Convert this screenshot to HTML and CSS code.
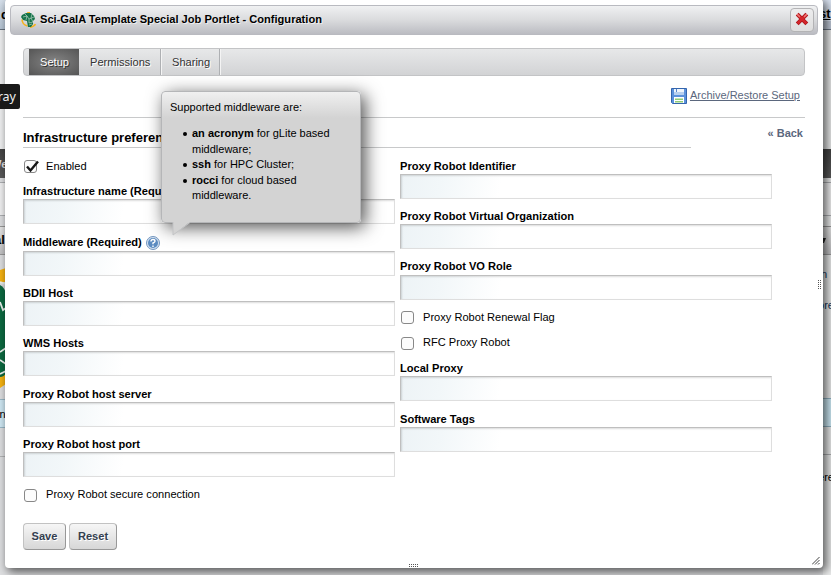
FILE: index.html
```html
<!DOCTYPE html>
<html lang="en">
<head>
<meta charset="utf-8">
<title>Configuration</title>
<link rel="stylesheet" href="styles.css">
</head>
<body>
<div class="page">
  <div class="edge edge-left">
    <div class="l-top"><span>d</span></div>
    <div class="l-blank"></div>
    <div class="l-nav"><span>We</span></div>
    <div class="l-bread"></div>
    <div class="l-gap"></div>
    <div class="l-head"><span>al</span></div>
    <div class="l-gap2"></div>
    <svg class="l-globe" width="6" height="120" viewBox="0 0 6 120">
      <path fill="#f7b311" d="M0 2l6-2v14l-6 0zM0 106l6-2v12l-6 4z"/>
      <path fill="#0c6a41" d="M0 17q4 2 6 8v80q-2 4-6 4z"/>
      <path fill="none" stroke="#eef3ef" stroke-width="1.8" d="M0 14l6 2M0 34l3 8 3-2M0 84l6-4M0 92l6 4M0 106l6-3"/>
    </svg>
    <div class="l-gap3"></div>
    <div class="l-info"><span>in</span></div>
    <div class="l-end"></div>
  </div>
  <div class="edge edge-right">
    <div class="r-top"><span>st</span></div>
    <div class="r-bar"></div>
    <div class="r-blank"></div>
    <div class="l-nav"></div>
    <div class="l-bread"></div>
    <div class="l-gap"></div>
    <div class="l-head"><svg width="8" height="8"><path d="M0 2h3L1 7H0z" fill="#222"/></svg></div>
    <div class="r-body"><span class="r-n">n</span><span class="r-re">ore</span></div>
    <div class="r-info"></div>
    <div class="r-line"></div>
    <div class="r-end"><span>ere</span></div>
  </div>
</div>
<div class="tray">tray</div>

<main class="dialog">
  <header class="titlebar">
    <svg class="logo" width="16" height="16" viewBox="0 0 16 16">
      <path fill="none" stroke="#f5b21d" stroke-width="1.6" d="M6 1l3-.4M1 7.500q.5 5.500 5.500 6.500M9 15.200q4-.5 5.500-3"/>
      <path fill="#16744b" d="M1 3l4-2 5 0 3 3 1 3-2 2 0 3-2 3H7L6 9 2 8 0 5z"/>
      <path fill="none" stroke="#b4d0c2" stroke-width=".7" d="M2 5l4-1 2 3 5-2M4 2l2 2-1 4M8 7l0 4 4-1M11 2l-1 4 2 4M8 13l3-1"/>
    </svg>
    <h1>Sci-GaIA Template Special Job Portlet - Configuration</h1>
    <button class="close" aria-label="Close"><svg width="14" height="14" viewBox="0 0 14 14"><path d="M2.200 2.200l9.600 9.600M11.800 2.200L2.200 11.800" stroke="#a81218" stroke-width="4"/><path d="M2.500 2.500l9 9M11.500 2.500l-9 9" stroke="#d3262b" stroke-width="2.500"/><path d="M2.500 2.500l2 2M11.500 2.500l-2 2" stroke="#ee7a7a" stroke-width="1.500" stroke-linecap="round"/></svg></button>
  </header>
  <nav class="tabs">
    <a class="tab active">Setup</a><a class="tab">Permissions</a><a class="tab">Sharing</a>
  </nav>
  <div class="archive">
    <svg width="16" height="16" viewBox="0 0 16 16"><path fill="#5b92dc" stroke="#3465ad" d="M.5.500h15v15H1.500l-1-1z"/><path fill="#eef5fc" d="M3 1h10v6H3z"/><path fill="#fff" d="M3 9h10v6H3z"/><path fill="#b7d0ef" d="M3 4h10v3H3z"/><path stroke="#5684c8" d="M5.500 1v3"/><path fill="#8fcb75" d="M4 10.500h8v1.500H4zM4 13h8v1.500H4z"/></svg>
    <a>Archive/Restore Setup</a>
  </div>
  <div class="subhead">
    <h2>Infrastructure preferences</h2>
    <a class="back">« Back</a>
  </div>
  <form class="columns">
    <section class="column">
      <label class="check enabled"><span class="box"><svg width="16" height="16" viewBox="0 0 16 16"><path d="M3 8.500l3.500 4L14 3.500" fill="none" stroke="#151515" stroke-width="2.400"/></svg></span>Enabled</label>
      <div class="field"><label>Infrastructure name (Required)</label><input></div>
      <div class="field middleware"><label>Middleware (Required)
        <svg class="help" width="14" height="14" viewBox="0 0 14 14"><circle cx="7" cy="7" r="6.500" fill="#d5e2f0" stroke="#7397c0"/><circle cx="7" cy="7" r="5" fill="#5b8bc1"/><path d="M5 5.500q0-2 2-2t2 1.700Q9 6.200 7 7v1.300M7 9.500V11" fill="none" stroke="#fff" stroke-width="1.400"/></svg></label><input></div>
      <div class="field"><label>BDII Host</label><input></div>
      <div class="field"><label>WMS Hosts</label><input></div>
      <div class="field extra"><label>Proxy Robot host server</label><input></div>
      <div class="field"><label>Proxy Robot host port</label><input></div>
      <label class="check secure"><span class="box"></span>Proxy Robot secure connection</label>
    </section>
    <section class="column">
      <div class="field first"><label>Proxy Robot Identifier</label><input></div>
      <div class="field"><label>Proxy Robot Virtual Organization</label><input></div>
      <div class="field extra lift"><label>Proxy Robot VO Role</label><input></div>
      <label class="check renewal"><span class="box"></span>Proxy Robot Renewal Flag</label>
      <label class="check rfc"><span class="box"></span>RFC Proxy Robot</label>
      <div class="field"><label>Local Proxy</label><input></div>
      <div class="field extra"><label>Software Tags</label><input></div>
    </section>
  </form>
  <footer class="actions"><button>Save</button><button>Reset</button></footer>

  <svg class="grip grip-right" width="4" height="10"><path d="M.500 0v10M2.500 0v10" stroke="#555" stroke-dasharray="1 1"/></svg>
  <svg class="grip grip-bottom" width="10" height="4"><path d="M0 .500h10M0 2.500h10" stroke="#555" stroke-dasharray="1 1"/></svg>
  <svg class="grip grip-corner" width="8" height="8" viewBox="0 0 8 8"><path d="M0 7.500L7.500 0M3 7.500L7.500 3M6 7.500L7.500 6" stroke="#444"/></svg>
</main>

<aside class="tooltip">
  <p>Supported middleware are:</p>
  <ul>
    <li><b>an acronym</b> for gLite based middleware;</li>
    <li><b>ssh</b> for HPC Cluster;</li>
    <li><b>rocci</b> for cloud based middleware.</li>
  </ul>
  <svg class="tail" width="20" height="14" viewBox="0 0 20 14"><path d="M1 0v13L18 0z" fill="#d3d3d3"/><path d="M1 0v13L18 .500" fill="none" stroke="#c3c4c6"/></svg>
</aside>
</body>
</html>
```
FILE: styles.css
```css
* { box-sizing: border-box; }
body {
  margin: 0;
  width: 831px;
  height: 575px;
  overflow: hidden;
  position: relative;
  background: #dedfe1;
  font: 11.080px/16px "Liberation Sans", Arial, sans-serif;
  color: #000;
}
h1, h2, p, ul { margin: 0; }

/* Page behind the dialog */
.page { display: flex; justify-content: space-between; height: 575px; }
.edge { width: 8px; overflow: hidden; display: flex; flex-direction: column; white-space: nowrap; }
.edge > * { flex: none; overflow: hidden; }
.l-top { height: 30px; background: linear-gradient(#d6e0eb, #b8c7d6); border-bottom: 1px solid #68737f; padding-top: 7px; font-weight: bold; font-size: 13px; }
.l-top span { margin-left: 1px; }
.l-blank { height: 119px; background: #f0f1f2; }
.l-nav { height: 29px; background: linear-gradient(#444, #5b5b5b); color: #ddd; padding-top: 7px; font-weight: bold; }
.l-nav span { margin-left: -9px; }
.l-bread { height: 34px; margin-top: 4px; border: solid #aeb0b3; border-width: 1px 0; background: #f1f1f2; }
.l-gap { height: 10px; }
.l-head { height: 29px; background: linear-gradient(#e8e8e8, #c2c2c4); border: solid #999; border-width: 1px 0; font-weight: bold; font-size: 13px; padding-top: 5px; }
.l-head span { margin-left: -6px; }
.l-gap2 { height: 13px; }
.l-globe { display: block; }
.l-gap3 { height: 11px; }
.l-info { height: 29px; background: #cfe8f4; border: solid #9ab9c8; border-width: 1px 0; padding-top: 6px; }
.l-info span { margin-left: -3px; }
.l-end { height: 29px; border-bottom: 1px solid #b3b4b6; }
.edge-right { background: #ebecec; }
.r-top { height: 21px; background: #dde6f4; font-weight: bold; font-size: 13px; padding-top: 6px; text-decoration: underline; }
.r-top span { margin-left: -4px; }
.r-bar { height: 9px; background: #c0c9d8; border-bottom: 1px solid #6f7a89; }
.r-blank { height: 119px; }
.r-body { height: 143px; padding-top: 11px; display: flex; flex-direction: column; gap: 15px; color: #14375e; }
.r-n { margin-left: -2px; }
.r-re { margin-left: -5px; }
.r-info { height: 29px; background: #cdeaf6; border: solid #91b2c2; border-width: 1px 0; }
.r-line { height: 28px; border-bottom: 1px solid #acaeb0; }
.r-end { padding-top: 14px; }
.r-end span { margin-left: -5px; }
.tray {
  position: absolute;
  left: 0;
  top: 84px;
  width: 20px;
  height: 25px;
  background: #191919;
  color: #eee;
  border-radius: 0 2px 2px 0;
  font: 12.500px/25px "Noto Sans", sans-serif;
  z-index: 1;
  display: flex;
  justify-content: flex-end;
  padding-right: 4px;
  overflow: hidden;
}

/* Dialog */
.dialog {
  position: absolute;
  left: 5px;
  top: -1px;
  width: 818px;
  height: 569px;
  padding: 6px 5px;
  background: #fff;
  border-radius: 4px;
  box-shadow: 3px 3px 10px 1px rgba(0, 0, 0, .6);
}
.titlebar {
  display: flex;
  align-items: center;
  height: 30px;
  padding: 0 3px 0 10px;
  border: 1px solid #b9bac0;
  border-radius: 4px;
  background: linear-gradient(#f0f1f2, #dadbdd 50%, #bbbcc2);
}
.titlebar h1 { margin-left: 3px; font-size: 11.080px; flex: 1; text-shadow: 1px 1px #eee; padding-bottom: 2px; }
.close {
  width: 24px;
  height: 24px;
  padding: 0;
  display: grid;
  place-items: center;
  border: 1px solid #b3b3b5;
  border-radius: 4px;
  background: linear-gradient(#ededee, #dedede);
}
.close svg { margin-bottom: 2px; }
.tabs {
  display: flex;
  height: 28px;
  margin: 13px 13px 0;
  padding-left: 5px;
  border: 1px solid #c3c4c6;
  border-radius: 4px;
  background: linear-gradient(#e7e8e9, #d2d3d5);
}
.tab { width: 59px; padding-left: 11px; line-height: 26px; border-right: 1px solid #aeb0b3; box-shadow: 1px 0 #f4f4f4; text-shadow: 1px 1px #fff; color: #333; }
.tab:nth-child(2) { width: 82px; }
.tab.active { width: 50px; color: #fff; border: 0; background: radial-gradient(#858585, #555); text-shadow: 1px 1px #333; box-shadow: none; }
.archive {
  display: flex;
  gap: 3px;
  height: 42px;
  margin: 0 13px;
  padding: 12px 5px 0 0;
  justify-content: flex-end;
  border-bottom: 1px solid #c8c9ca;
  color: #5b677d;
  font-size: 11px;
  text-decoration: underline;
}
.archive a { height: 16px; line-height: 15px; }
.subhead { display: flex; justify-content: space-between; height: 30px; margin: 0 13px; padding: 0 2px 0 0; }
.subhead h2 { width: 668px; border-bottom: 1px solid #c8c9ca; font-size: 13px; line-height: 16px; padding-top: 12px; }
.back { padding-top: 8px; line-height: 15px; font-size: 11px; font-weight: bold; color: #5b677d; }
.columns { display: flex; gap: 5px; height: 375px; margin: 0 13px; }
.column { width: 372px; }
.field { height: 41px; margin-bottom: 9px; font-weight: bold; }
.field label { display: flex; align-items: center; gap: 4px; height: 16px; }
.field input {
  display: block;
  width: 372px;
  height: 25px;
  border: 1px solid;
  border-color: #bfbfbf #dedede #dedede #bfbfbf;
  box-shadow: inset 1px 1px 2px rgba(0, 0, 0, .14);
  background: linear-gradient(100deg, #edf3f6, #f2f7f9 40px, #fff 100px);
}
.field.middleware { margin-top: 11px; }
.middleware label, .lift label { position: relative; top: -1px; }
.field.extra { margin-top: 10px; }
.field.first { margin-top: 10px; }
.help { position: relative; top: 1px; }
.check { display: flex; align-items: center; gap: 9px; height: 16px; padding-left: 1px; }
.box { width: 13px; height: 13px; border: 1px solid #888; border-radius: 3px; background: #fcfcfc; position: relative; top: .5px; }
.secure .box, .rfc .box { top: 1.5px; }
.box svg { position: absolute; left: -1px; top: -3px; }
.enabled { margin: 10px 0 9px; }
.secure { margin-top: 9px; }
.renewal { margin-top: 9px; }
.rfc { margin: 9px 0 10px; }
.actions { display: flex; gap: 3px; margin: 0 13px; }
.actions button {
  width: 43px;
  height: 27px;
  padding: 0 0 1px;
  font: bold 11.080px "Liberation Sans", Arial, sans-serif;
  color: #34404f;
  text-shadow: 1px 1px #fff;
  border: 1px solid;
  border-color: #c2c2c2 #989898 #989898 #c2c2c2;
  border-radius: 4px;
  background: linear-gradient(#f6f6f6, #d7d7d7);
}
.actions button:last-child { width: 48px; }
.grip { position: absolute; }
.grip-right { right: 1px; top: 281px; }
.grip-bottom { left: 404px; bottom: 0; }
.grip-corner { right: 3px; bottom: 3px; }

/* Help tooltip */
.tooltip {
  position: absolute;
  left: 161px;
  top: 91px;
  width: 200px;
  height: 132px;
  padding: 8px;
  border: 1px solid #b5b6b8;
  border-radius: 4px;
  background: linear-gradient(#f0f0f0, #d3d3d3 26px);
  box-shadow: 4px 4px 18px rgba(0, 0, 0, .7);
  font-size: 11px;
  line-height: 15.500px;
}
.tooltip p { line-height: 15px; }
.tooltip ul { margin-top: 11px; padding-left: 22px; list-style: none; }
.tooltip li { position: relative; }
.tooltip li::before { content: ""; position: absolute; left: -9px; top: 6px; width: 4px; height: 4px; border-radius: 50%; background: #000; }
.tail { position: absolute; left: 10px; top: 130px; }
```
